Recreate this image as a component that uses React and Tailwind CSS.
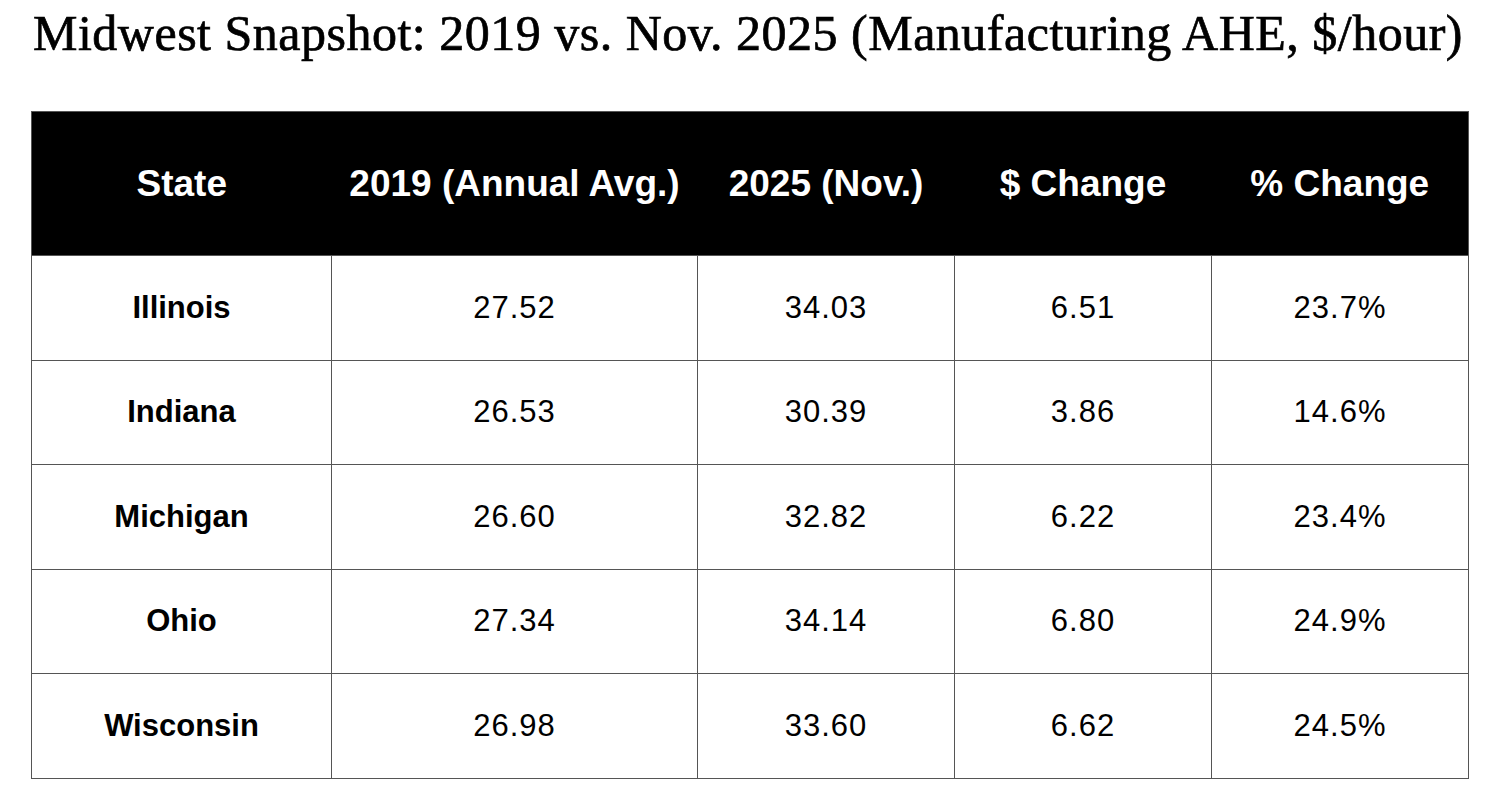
import React from "react";

const rows = [
  ["Illinois", "27.52", "34.03", "6.51", "23.7%"],
  ["Indiana", "26.53", "30.39", "3.86", "14.6%"],
  ["Michigan", "26.60", "32.82", "6.22", "23.4%"],
  ["Ohio", "27.34", "34.14", "6.80", "24.9%"],
  ["Wisconsin", "26.98", "33.60", "6.62", "24.5%"],
];

const heads = ["State", "2019 (Annual Avg.)", "2025 (Nov.)", "$ Change", "% Change"];
const widths = ["w-[300px]", "w-[366px]", "w-[257px]", "w-[257px]", "w-[257px]"];

export default function App() {
  return (
    <div className="w-[1499px] h-[809px] bg-white pl-[31px] pt-[8px] overflow-hidden">
      <h1 className="text-[50px] leading-none text-black whitespace-nowrap font-['Liberation_Serif',serif] font-normal tracking-[0.5px] [-webkit-text-stroke:0.7px_black] pl-[2px]">
        Midwest Snapshot: 2019 vs. Nov. 2025 (Manufacturing AHE, $/hour)
      </h1>
      <table className="mt-[53px] w-[1438px] border-collapse table-fixed font-['Liberation_Sans',Arial,sans-serif] text-black border border-[#555]">
        <colgroup>
          {widths.map((w, i) => (
            <col key={i} className={w} />
          ))}
        </colgroup>
        <thead>
          <tr className="h-[144px] bg-black">
            {heads.map((h) => (
              <th key={h} className="text-white text-[37px] font-bold text-center align-middle border-t border-b border-[#555] whitespace-nowrap">
                {h}
              </th>
            ))}
          </tr>
        </thead>
        <tbody>
          {rows.map((r, ri) => (
            <tr key={r[0]} className={ri % 2 === 0 ? "h-[105px]" : "h-[104px]"}>
              {r.map((c, ci) => (
                <td
                  key={ci}
                  className={
                    ci === 0
                      ? "text-[31px] font-bold text-center align-middle border border-[#555]"
                      : "text-[31px] font-normal tracking-[1px] text-center align-middle border border-[#555]"
                  }
                >
                  {c}
                </td>
              ))}
            </tr>
          ))}
        </tbody>
      </table>
    </div>
  );
}
